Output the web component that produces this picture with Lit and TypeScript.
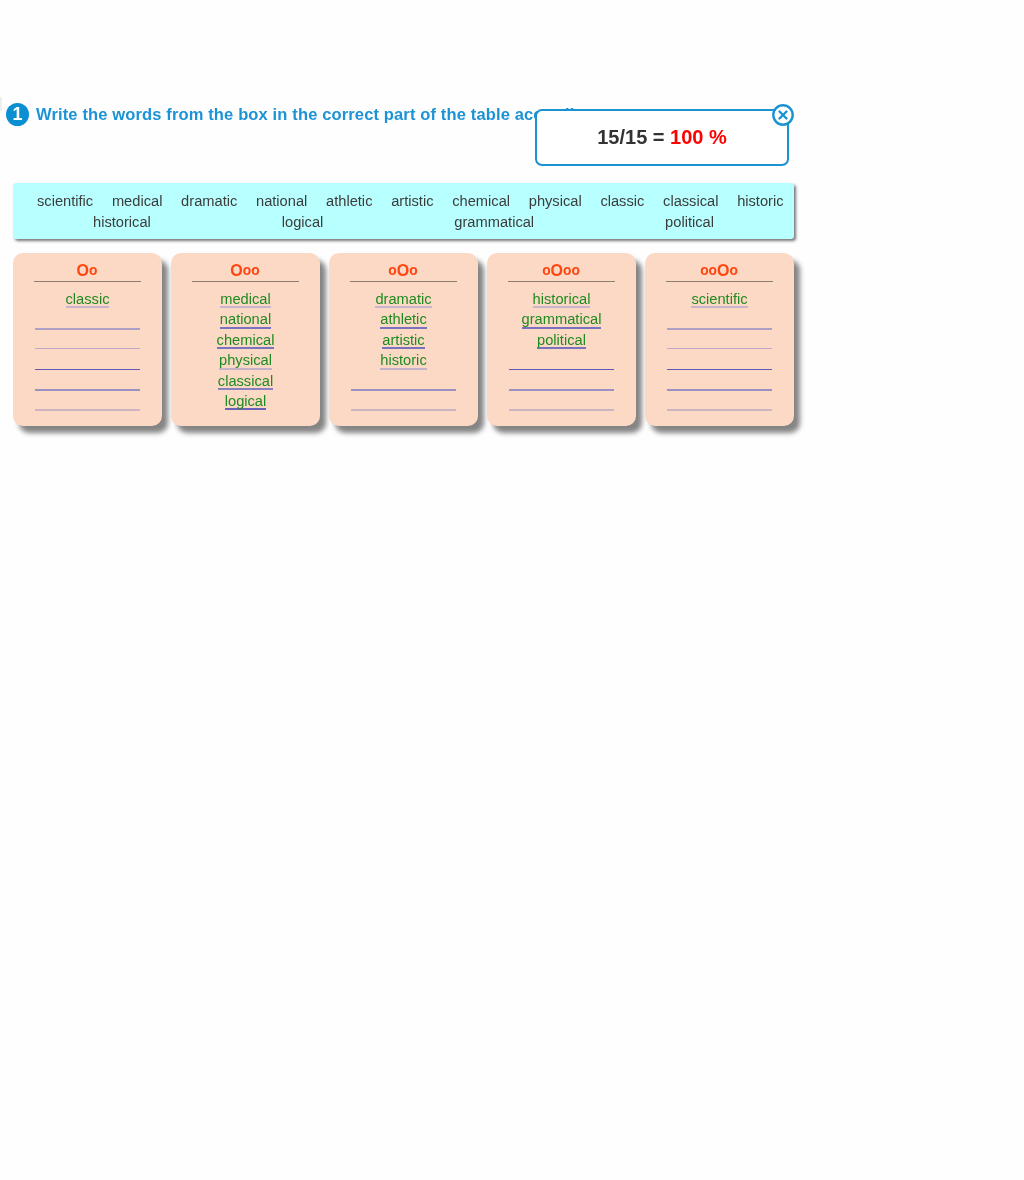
import { LitElement, html, css } from "lit";
import { customElement } from "lit/decorators.js";

const COLS: { head: [string, boolean][]; words: string[] }[] = [
  { head: [["O", true], ["o", false]], words: ["classic"] },
  { head: [["O", true], ["oo", false]], words: ["medical", "national", "chemical", "physical", "classical", "logical"] },
  { head: [["o", false], ["O", true], ["o", false]], words: ["dramatic", "athletic", "artistic", "historic"] },
  { head: [["o", false], ["O", true], ["oo", false]], words: ["historical", "grammatical", "political"] },
  { head: [["oo", false], ["O", true], ["o", false]], words: ["scientific"] },
];
const ROW_TONES = ["t0", "t1", "t2", "t3", "t4", "t5"];

@customElement("app-root")
export class AppRoot extends LitElement {
  static styles = css`
    :host {
      display: block;
      height: 1180px;
      background: #fefefe;
      font-family: "Liberation Sans", Arial, sans-serif;
      filter: blur(0.5px);
    }
    .page { position: relative; width: 800px; padding-top: 103px; }
    .edge { position: absolute; left: 0; top: 97px; width: 2px; height: 14px; background: #eeeeee; }
    .head { display: flex; align-items: center; gap: 7px; padding-left: 6px; height: 23px; }
    .num {
      width: 23px; height: 23px; border-radius: 50%; background: #0a8fd2; color: #fff;
      font-weight: 700; font-size: 18px; display: flex; align-items: center; justify-content: center; flex: none;
    }
    .title { font-size: 16.5px; font-weight: 700; color: #1c93d6; white-space: nowrap; letter-spacing: 0.14px; }
    .box {
      margin: 57px 0 0 13px; width: 781px; height: 56px; box-sizing: border-box; background: #b8ffff;
      border-radius: 3px; box-shadow: 2px 2px 3px #777; padding-top: 8px;
      font-size: 14.67px; line-height: 20.5px; color: #3c3c3c;
    }
    .r1 { display: flex; gap: 18.7px; padding-left: 24px; white-space: nowrap; }
    .r2 { display: flex; justify-content: space-between; padding: 0 80px; }
    .cols { display: flex; gap: 9px; margin: 14px 0 0 13px; }
    .card {
      width: 149px; height: 173px; background: #fcd9c5; border-radius: 10px;
      box-shadow: 6px 7px 5px #858585; display: flex; flex-direction: column; align-items: center;
    }
    .hd {
      width: 107px; height: 29px; margin-right: 1px; box-sizing: border-box; border-bottom: 1px solid #8d7f70;
      color: #ff4510; font-weight: 700; font-size: 13.8px;
      display: flex; align-items: center; justify-content: center; padding-top: 7px;
    }
    .hd b { font-size: 16px; }
    .rows { display: flex; flex-direction: column; margin-top: 6px; width: 105px; }
    .row { height: 20.4px; display: flex; justify-content: center; align-items: flex-end; font-size: 14.67px; }
    .w {
      color: #1f8a1f; line-height: 22.5px; height: 20.4px; box-sizing: border-box; white-space: nowrap;
    }
    .w.t0 { border-bottom: 2px solid #c8b4cc; }
    .w.t1 { border-bottom: 2px solid #7a72bc; }
    .w.t2 { border-bottom: 2px solid #7a72bc; }
    .w.t3 { border-bottom: 2px solid #c4b2c8; }
    .w.t4 { border-bottom: 2px solid #8a80c0; }
    .w.t5 { border-bottom: 2px solid #6a62b8; }
    .blank { width: 105px; height: 0; }
    .blank.t1 { border-bottom: 2px solid #ad9fc6; margin-bottom: -1px; }
    .blank.t2 { border-bottom: 1px solid #bcaac8; }
    .blank.t3 { border-bottom: 1px solid #5f58b4; }
    .blank.t4 { border-bottom: 2px solid #9d90c2; margin-bottom: -1px; }
    .blank.t5 { border-bottom: 2px solid #cdb4c4; margin-bottom: -1px; }
    .modal {
      position: absolute; left: 535px; top: 109px; width: 254px; height: 57px; box-sizing: border-box;
      background: #fff; border: 2px solid #1c93d1; border-radius: 7px;
      display: flex; align-items: center; justify-content: center;
      font-size: 20px; font-weight: 700; color: #333; white-space: pre;
    }
    .modal em { font-style: normal; color: #ff0000; }
    .close { position: absolute; right: -7px; top: -7px; width: 22px; height: 22px; display: block; }
  `;

  render() {
    return html`<div class="page">
      <div class="edge"></div>
      <div class="head"><span class="num">1</span><span class="title">Write the words from the box in the correct part of the table according to stress.</span></div>
      <div class="box">
        <div class="r1">${["scientific","medical","dramatic","national","athletic","artistic","chemical","physical","classic","classical","historic"].map((w) => html`<span>${w}</span>`)}</div>
        <div class="r2">${["historical","logical","grammatical","political"].map((w) => html`<span>${w}</span>`)}</div>
      </div>
      <div class="cols">
        ${COLS.map((c) => html`<div class="card">
          <div class="hd">${c.head.map(([t, big]) => (big ? html`<b>${t}</b>` : html`<span>${t}</span>`))}</div>
          <div class="rows">
            ${ROW_TONES.map((tone, i) => html`<div class="row">
              ${c.words[i]
                ? html`<span class="w ${tone}">${c.words[i]}</span>`
                : html`<span class="blank ${tone}"></span>`}
            </div>`)}
          </div>
        </div>`)}
      </div>
      <div class="modal">15/15 = <em>100 %</em>
        <svg class="close" viewBox="0 0 22 22">
          <circle cx="11" cy="11" r="9.7" fill="#fff" stroke="#1c93d1" stroke-width="2.4"/>
          <path d="M7.5 7.5l7 7M14.5 7.5l-7 7" stroke="#1c93d1" stroke-width="2.4" stroke-linecap="round" fill="none"/>
        </svg>
      </div>
    </div>`;
  }
}
